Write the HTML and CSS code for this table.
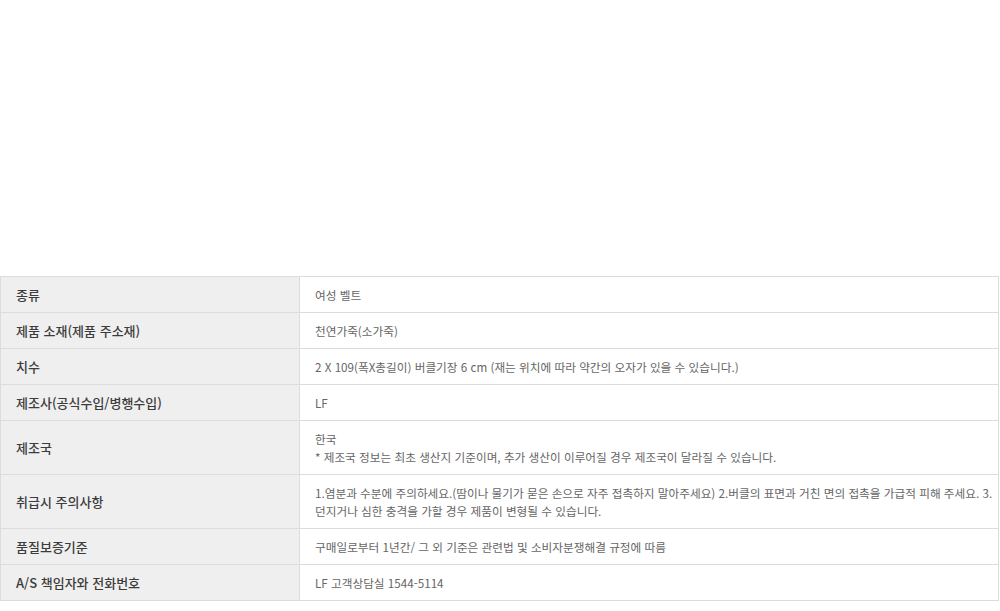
FILE: index.html
```html
<!DOCTYPE html>
<html lang="ko">
<head>
<meta charset="utf-8">
<link rel="stylesheet" href="styles.css">
</head>
<body>
<div class="top-space"></div>
<table class="info">
  <tbody>
    <tr><th>종류</th><td>여성 벨트</td></tr>
    <tr><th>제품 소재(제품 주소재)</th><td>천연가죽(소가죽)</td></tr>
    <tr><th>치수</th><td>2 X 109(폭X총길이) 버클기장 6 cm (재는 위치에 따라 약간의 오자가 있을 수 있습니다.)</td></tr>
    <tr><th>제조사(공식수입/병행수입)</th><td>LF</td></tr>
    <tr><th>제조국</th><td>한국<br>* 제조국 정보는 최초 생산지 기준이며, 추가 생산이 이루어질 경우 제조국이 달라질 수 있습니다.</td></tr>
    <tr><th>취급시 주의사항</th><td><span class="line">1.염분과 수분에 주의하세요.(땀이나 물기가 묻은 손으로 자주 접촉하지 말아주세요) 2.버클의 표면과 거친 면의 접촉을 가급적 피해 주세요. 3.</span><br>던지거나 심한 충격을 가할 경우 제품이 변형될 수 있습니다.</td></tr>
    <tr><th>품질보증기준</th><td>구매일로부터 1년간/ 그 외 기준은 관련법 및 소비자분쟁해결 규정에 따름</td></tr>
    <tr><th>A/S 책임자와 전화번호</th><td>LF 고객상담실 1544-5114</td></tr>
  </tbody>
</table>
</body>
</html>
```

FILE: styles.css
```css
html, body {
  margin: 0;
  padding: 0;
  background: #fff;
}
body {
  font-family: "Noto Sans CJK KR", "Noto Sans", sans-serif;
}
.top-space {
  height: 276px;
}
.info {
  width: 999px;
  border-collapse: collapse;
  border: 1px solid #dcdcdc;
}
.info th,
.info td {
  border: 1px solid #dcdcdc;
  padding: 9px 2px 8px 15px;
  line-height: 18px;
  text-align: left;
  vertical-align: middle;
}
.info th {
  width: 281px;
  background: #efefef;
  color: #3c3c3c;
  font-size: 13px;
  font-weight: 500;
}
.info td {
  color: #666;
  font-size: 11.65px;
}
.info .line {
  white-space: nowrap;
}
```
